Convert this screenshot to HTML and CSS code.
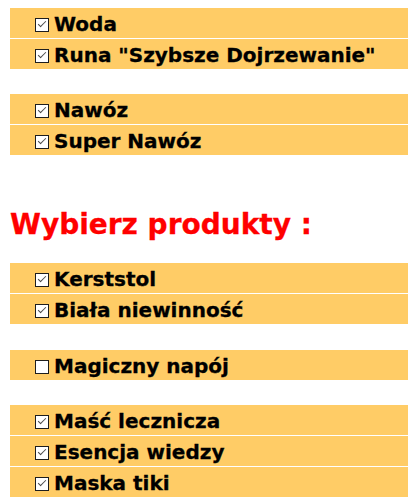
FILE: index.html
```html
<!DOCTYPE html>
<html lang="pl">
<head>
<meta charset="utf-8">
<link rel="stylesheet" href="styles.css">
</head>
<body>
<div class="group g1">
  <div class="row"><span class="cb on"></span><span class="label">Woda</span></div>
  <div class="row"><span class="cb on"></span><span class="label">Runa "Szybsze Dojrzewanie"</span></div>
</div>
<div class="group g2">
  <div class="row"><span class="cb on"></span><span class="label">Nawóz</span></div>
  <div class="row"><span class="cb on"></span><span class="label">Super Nawóz</span></div>
</div>
<h1 class="title">Wybierz produkty :</h1>
<div class="group g3">
  <div class="row"><span class="cb on"></span><span class="label">Kerststol</span></div>
  <div class="row"><span class="cb on"></span><span class="label">Biała niewinność</span></div>
</div>
<div class="group g4">
  <div class="row"><span class="cb"></span><span class="label">Magiczny napój</span></div>
</div>
<div class="group g5">
  <div class="row"><span class="cb on"></span><span class="label">Maść lecznicza</span></div>
  <div class="row"><span class="cb on"></span><span class="label">Esencja wiedzy</span></div>
  <div class="row"><span class="cb on"></span><span class="label">Maska tiki</span></div>
</div>
</body>
</html>
```
FILE: styles.css
```css
html, body {
  margin: 0;
  padding: 0;
  background: #ffffff;
}
body {
  font-family: "DejaVu Sans", Verdana, sans-serif;
  padding-top: 8px;
  overflow: hidden;
}
.group {
  display: flex;
  flex-direction: column;
  gap: 1px;
  margin-left: 10px;
}
.g2 { margin-top: 25px; }
.g3 { margin-top: 21px; }
.g4 { margin-top: 26px; }
.g5 { margin-top: 25px; }
.row {
  height: 30px;
  background: #ffcc66;
  display: flex;
  align-items: center;
  padding-left: 25px;
}
.cb {
  width: 12px;
  height: 12px;
  border: 1px solid #1e1e1e;
  background: #ffffff;
  margin-top: 4px;
  margin-right: 5px;
  flex: none;
  position: relative;
}
.cb.on::after {
  content: "";
  position: absolute;
  left: 2px;
  top: 2px;
  width: 7px;
  height: 3px;
  border-left: 1px solid #4a4a4a;
  border-bottom: 1px solid #4a4a4a;
  transform: rotate(-45deg);
}
.label {
  font-size: 20px;
  font-weight: bold;
  color: #000000;
  white-space: nowrap;
  margin-top: 1px;
  -webkit-text-stroke: 0.3px #000000;
}
.title {
  margin: 53px 0 0 10px;
  font-size: 28px;
  line-height: 34px;
  font-weight: bold;
  color: #ff0000;
  -webkit-text-stroke: 0.3px #ff0000;
}
```
